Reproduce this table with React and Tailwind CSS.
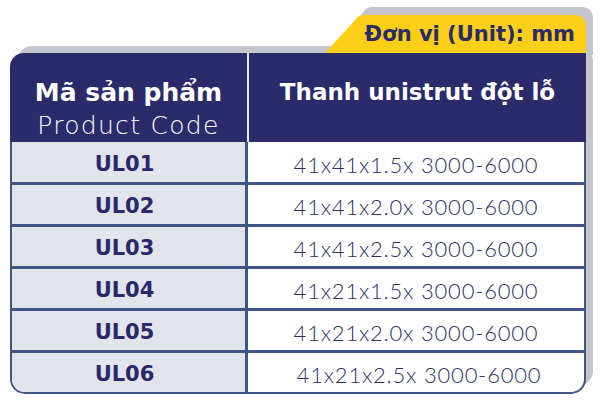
import React from "react";

const rows = [
  ["UL01", "41x41x1.5x 3000-6000"],
  ["UL02", "41x41x2.0x 3000-6000"],
  ["UL03", "41x41x2.5x 3000-6000"],
  ["UL04", "41x21x1.5x 3000-6000"],
  ["UL05", "41x21x2.0x 3000-6000"],
  ["UL06", "41x21x2.5x 3000-6000"],
];

const bold = { fontFamily: "'DejaVu Sans', 'Noto Sans', sans-serif" };
const light = { fontFamily: "Lato, 'Noto Sans', sans-serif" };
const xlight = { fontFamily: "'DejaVu Sans ExtraLight', 'DejaVu Sans', sans-serif" };

export default function App() {
  return (
    <div className="relative w-[600px] h-[403px] bg-white overflow-hidden">
      {/* gray offset shadow silhouette */}
      <svg className="absolute left-0 top-0" width="600" height="403" viewBox="0 0 600 403">
        <rect x="17" y="46" width="576" height="340" rx="15" fill="#c3c6cd" />
        <path d="M332,55 L364,11 Q367,7 372,7 L581,7 Q593,7 593,19 L593,55 Z" fill="#c3c6cd" />
      </svg>

      <div className="relative flex flex-col w-[576px] ml-[10px] mt-[15px]">
        {/* unit tab */}
        <div className="flex justify-end">
          <div className="relative w-[261px] h-[38px] flex items-center justify-end pr-[11px]">
            <svg className="absolute left-0 top-0" width="261" height="38" viewBox="0 0 261 38">
              <path d="M0,38 L31,4 Q34,0 39,0 L249,0 Q261,0 261,12 L261,38 Z" fill="#fccf17" />
            </svg>
            <span className="relative text-[21px] font-bold leading-none text-[#2b2a6a]" style={bold}>
              Đơn vị (Unit): mm
            </span>
          </div>
        </div>

        {/* header */}
        <div className="grid grid-cols-[239px_1fr] h-[89px] bg-[#2b2a6a] rounded-tl-[14px] text-white">
          <div className="flex flex-col items-center pt-[23px] border-r-2 border-[#e6e7f0]">
            <div className="text-[25px] font-bold leading-[33px]" style={bold}>Mã sản phẩm</div>
            <div className="text-[25px] font-extralight leading-[33px] tracking-[1.3px]" style={xlight}>Product Code</div>
          </div>
          <div className="flex justify-center pt-[23px]">
            <div className="text-[23px] font-bold leading-[33px]" style={bold}>Thanh unistrut đột lỗ</div>
          </div>
        </div>

        {/* body */}
        <div className="flex flex-col border-x-2 border-b-2 border-[#3e5585] rounded-b-[15px] overflow-hidden bg-white">
          {rows.map(([code, spec], i) => (
            <div
              key={code}
              className={
                i === 0
                  ? "grid grid-cols-[236px_1fr] h-[40px]"
                  : "grid grid-cols-[236px_1fr] h-[42px] border-t-[3px] border-[#3e5585]"
              }
            >
              <div className="flex items-center justify-center pr-[8px] pt-[5px] bg-[#e2e4eb] border-r-[3px] border-[#3e5585]">
                <span className="text-[21px] font-bold text-[#28286a]" style={bold}>{code}</span>
              </div>
              <div className={i === 5 ? "flex items-center justify-center pt-[4px] pl-[6px]" : "flex items-center justify-center pt-[4px]"}>
                <span className="text-[22px] font-light text-[#2d2f63] tracking-[0.8px]" style={light}>{spec}</span>
              </div>
            </div>
          ))}
        </div>
      </div>
    </div>
  );
}
